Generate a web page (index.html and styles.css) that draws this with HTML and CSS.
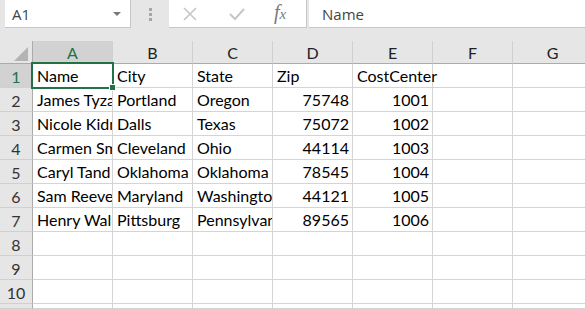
FILE: index.html
```html
<!DOCTYPE html>
<html lang="en">
<head>
    <meta charset="UTF-8">
    <title>Book1 - Sheet1</title>
    <link rel="stylesheet" href="styles.css">
</head>
<body>
    <div class="formula-bar">
        <div class="name-box">
            <span>A1</span>
            <span class="dropdown"></span>
        </div>
        <div class="grip">
            <i></i><i></i><i></i>
        </div>
        <div class="fx-box">
            <svg class="icon" width="14" height="14" viewBox="0 0 14 14">
                <path d="M1 1 L13 13 M13 1 L1 13" stroke="#c6c6c6" stroke-width="1.6" fill="none"/>
            </svg>
            <svg class="icon" width="16" height="14" viewBox="0 0 16 14">
                <path d="M1 7 L6 12 L15 2" stroke="#c6c6c6" stroke-width="2" fill="none"/>
            </svg>
            <span class="fx">f<sub>x</sub></span>
        </div>
        <div class="formula">Name</div>
    </div>

    <div class="sheet">
        <div class="corner"><span class="tri"></span></div>
        <div class="col-head selected">A</div>
        <div class="col-head">B</div>
        <div class="col-head">C</div>
        <div class="col-head">D</div>
        <div class="col-head">E</div>
        <div class="col-head">F</div>
        <div class="col-head">G</div>

        <div class="row-head selected">1</div>
        <div class="cell active">Name<span class="handle"></span></div>
        <div class="cell">City</div>
        <div class="cell">State</div>
        <div class="cell">Zip</div>
        <div class="cell spill">CostCenter</div>
        <div class="cell"></div>
        <div class="cell"></div>

        <div class="row-head">2</div>
        <div class="cell">James Tyza</div>
        <div class="cell">Portland</div>
        <div class="cell">Oregon</div>
        <div class="cell num">75748</div>
        <div class="cell num">1001</div>
        <div class="cell"></div>
        <div class="cell"></div>

        <div class="row-head">3</div>
        <div class="cell">Nicole Kidm</div>
        <div class="cell">Dalls</div>
        <div class="cell">Texas</div>
        <div class="cell num">75072</div>
        <div class="cell num">1002</div>
        <div class="cell"></div>
        <div class="cell"></div>

        <div class="row-head">4</div>
        <div class="cell">Carmen Sm</div>
        <div class="cell">Cleveland</div>
        <div class="cell">Ohio</div>
        <div class="cell num">44114</div>
        <div class="cell num">1003</div>
        <div class="cell"></div>
        <div class="cell"></div>

        <div class="row-head">5</div>
        <div class="cell">Caryl Tand</div>
        <div class="cell">Oklahoma</div>
        <div class="cell">Oklahoma</div>
        <div class="cell num">78545</div>
        <div class="cell num">1004</div>
        <div class="cell"></div>
        <div class="cell"></div>

        <div class="row-head">6</div>
        <div class="cell">Sam Reeve</div>
        <div class="cell">Maryland</div>
        <div class="cell">Washingto</div>
        <div class="cell num">44121</div>
        <div class="cell num">1005</div>
        <div class="cell"></div>
        <div class="cell"></div>

        <div class="row-head">7</div>
        <div class="cell">Henry Wal</div>
        <div class="cell">Pittsburg</div>
        <div class="cell">Pennsylvan</div>
        <div class="cell num">89565</div>
        <div class="cell num">1006</div>
        <div class="cell"></div>
        <div class="cell"></div>

        <div class="row-head">8</div>
        <div class="cell"></div><div class="cell"></div><div class="cell"></div><div class="cell"></div><div class="cell"></div><div class="cell"></div><div class="cell"></div>
        <div class="row-head">9</div>
        <div class="cell"></div><div class="cell"></div><div class="cell"></div><div class="cell"></div><div class="cell"></div><div class="cell"></div><div class="cell"></div>
        <div class="row-head">10</div>
        <div class="cell"></div><div class="cell"></div><div class="cell"></div><div class="cell"></div><div class="cell"></div><div class="cell"></div><div class="cell"></div>
        <div class="row-head"></div>
        <div class="cell"></div><div class="cell"></div><div class="cell"></div><div class="cell"></div><div class="cell"></div><div class="cell"></div><div class="cell"></div>
    </div>
</body>
</html>
```

FILE: styles.css
```css
body {
    margin: 0;
    width: 585px;
    height: 309px;
    overflow: hidden;
    background: #e6e6e6;
    font-family: "Open Sans", "Noto Sans", sans-serif;
}

/* formula bar */
.formula-bar {
    display: flex;
    height: 28px;
    margin-bottom: 13px;
}
.name-box {
    width: 126px;
    margin-left: 5px;
    background: #fff;
    border-right: 1px solid #c6c6c6;
    border-bottom: 1px solid #c6c6c6;
    box-sizing: border-box;
    display: flex;
    align-items: center;
    justify-content: space-between;
    padding: 0 9px 0 7px;
    font-size: 15px;
    color: #444;
}
.dropdown {
    width: 0;
    height: 0;
    border-left: 4px solid transparent;
    border-right: 4px solid transparent;
    border-top: 4px solid #777;
}
.grip {
    width: 38px;
    display: flex;
    flex-direction: column;
    align-items: center;
    justify-content: center;
    gap: 2px;
}
.grip i {
    width: 3px;
    height: 3px;
    background: #a6a6a6;
}
.fx-box {
    width: 138px;
    background: #fff;
    border-bottom: 1px solid #c6c6c6;
    border-right: 1px solid #c6c6c6;
    box-sizing: border-box;
    display: flex;
    align-items: center;
    padding-left: 14px;
    gap: 32px;
}
.fx {
    font-family: "Liberation Serif", serif;
    font-style: italic;
    font-size: 20px;
    color: #7a7a7a;
    margin-left: -3px;
    margin-top: -2px;
}
.fx sub {
    font-size: 15px;
    vertical-align: 0;
}
.formula {
    flex: 1;
    margin-left: 2px;
    background: #fff;
    border-bottom: 1px solid #c6c6c6;
    display: flex;
    align-items: center;
    padding-left: 13px;
    font-size: 15px;
    color: #444;
}

/* sheet grid */
.sheet {
    display: grid;
    grid-template-columns: 33px repeat(7, 80px);
    grid-template-rows: 23px repeat(10, 24px) 5px;
    height: 268px;
    overflow: hidden;
    background: #fff;
    font-family: "Lato", "Liberation Sans", sans-serif;
    font-size: 16px;
}
.corner {
    position: relative;
    background: #e6e6e6;
    border-right: 1px solid #ababab;
    border-bottom: 1px solid #ababab;
}
.tri {
    position: absolute;
    right: 4px;
    bottom: 2px;
    width: 0;
    height: 0;
    border-left: 14px solid transparent;
    border-bottom: 14px solid #b4b4b4;
}
.col-head {
    background: #e6e6e6;
    border-right: 1px solid #d0d0d0;
    border-bottom: 1px solid #ababab;
    display: flex;
    align-items: center;
    justify-content: center;
    color: #222;
    padding-top: 1px;
}
.row-head {
    background: #e6e6e6;
    border-right: 1px solid #ababab;
    border-bottom: 1px solid #d0d0d0;
    display: flex;
    align-items: center;
    justify-content: center;
    color: #333;
    padding-top: 2px;
}
.col-head.selected,
.row-head.selected {
    background: #d2d2d2;
    color: #217346;
}
.cell {
    position: relative;
    border-right: 1px solid #d4d4d4;
    border-bottom: 1px solid #d4d4d4;
    padding: 2px 3px 0 4px;
    white-space: nowrap;
    overflow: hidden;
    color: #000;
}
.cell.num {
    text-align: right;
}
.cell.spill {
    overflow: visible;
}
.cell.active {
    overflow: visible;
    z-index: 1;
}
.cell.active::after {
    content: "";
    position: absolute;
    left: -2px;
    top: -2px;
    right: -2px;
    bottom: -2px;
    border: 2px solid #217346;
}
.handle {
    position: absolute;
    right: -4px;
    bottom: -4px;
    width: 5px;
    height: 5px;
    background: #217346;
    border: 1px solid #fff;
    z-index: 2;
}
```
